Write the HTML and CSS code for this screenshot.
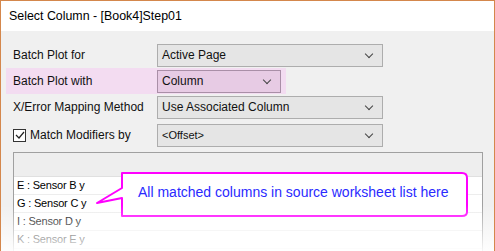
FILE: index.html
```html
<!DOCTYPE html>
<html lang="en">
    <head>
        <meta charset="UTF-8" />
        <title>Select Column</title>
        <link rel="stylesheet" href="styles.css">
    </head>
    <body>
        <div id="dialog">
            <div class="title-bar">Select Column - [Book4]Step01</div>
            <div class="content">
                <div class="form">
                    <div class="row">
                        <div class="label">Batch Plot for</div>
                        <div class="combo">Active Page<span class="arrow"></span></div>
                    </div>
                    <div class="row hl">
                        <div class="label">Batch Plot with</div>
                        <div class="combo short">Column<span class="arrow"></span></div>
                    </div>
                    <div class="row">
                        <div class="label">X/Error Mapping Method</div>
                        <div class="combo">Use Associated Column<span class="arrow"></span></div>
                    </div>
                    <div class="row check-row">
                        <div class="label">
                            <span class="checkbox">
                                <svg width="10" height="10" viewBox="0 0 10 10"><path d="M1 5 L4 8 L9 2" fill="none" stroke="#222" stroke-width="1.2"/></svg>
                            </span>
                            Match Modifiers by
                        </div>
                        <div class="combo small-text">&lt;Offset&gt;<span class="arrow"></span></div>
                    </div>
                </div>
                <div class="list">
                    <div class="list-head"></div>
                    <div class="list-row">E : Sensor B y</div>
                    <div class="list-row">G : Sensor C y</div>
                    <div class="list-row">I : Sensor D y</div>
                    <div class="list-row">K : Sensor E y</div>
                    <div class="callout">
                        <svg width="374" height="46" viewBox="0 0 374 46">
                            <path d="M26 1 H366 Q371 1 371 6 V40 Q371 44 366 44 H26 V26 L1 31 L26 16 Z" fill="#fff" stroke="#ff00ff" stroke-width="2" stroke-linejoin="round"/>
                        </svg>
                        <div class="callout-text">All matched columns in source worksheet list here</div>
                    </div>
                </div>
            </div>
            <div class="fade"></div>
        </div>
    </body>
</html>
```

FILE: styles.css
```css
body {
    margin: 0;
    background-color: #fff;
    font-family: "Liberation Sans", Arial, sans-serif;
}
#dialog {
    position: relative;
    width: 495px;
    height: 251px;
    box-sizing: border-box;
    border: 1px solid #d4874c;
    border-bottom: none;
    overflow: hidden;
    background-color: #f0f0f0;
}
.title-bar {
    height: 30px;
    line-height: 30px;
    padding-left: 8px;
    background-color: #fff;
    font-size: 12.4px;
    color: #000;
}
.content {
    padding-top: 11px;
}
.form {
    display: flex;
    flex-direction: column;
}
.row {
    display: flex;
    align-items: center;
    height: 26px;
    padding-left: 12px;
    font-size: 12px;
    color: #111;
}
.row.hl {
    margin-left: 5px;
    padding-left: 7px;
    width: 280px;
    box-sizing: border-box;
    background-color: #f3dcf1;
}
.label {
    width: 144px;
    display: flex;
    align-items: center;
}
.combo {
    position: relative;
    width: 226px;
    height: 23px;
    line-height: 21px;
    box-sizing: border-box;
    padding-left: 4px;
    border: 1px solid #adadad;
    background-color: #e5e5e5;
}
.combo.short {
    width: 124px;
    background-color: #e7cbe4;
    border-color: #a98fa7;
}
.combo.small-text {
    font-size: 11px;
}
.arrow {
    position: absolute;
    right: 10px;
    top: 6px;
    width: 5px;
    height: 5px;
    border-right: 1px solid #444;
    border-bottom: 1px solid #444;
    transform: rotate(45deg);
}
.check-row {
    margin-top: 3px;
    height: 24px;
}
.checkbox {
    display: inline-flex;
    align-items: center;
    justify-content: center;
    width: 11px;
    height: 11px;
    margin-right: 4px;
    border: 1px solid #333;
    background-color: #fff;
}
.list {
    position: relative;
    margin: 5px 11px 0 12px;
    border: 1px solid #a0a0a0;
    background-color: #fff;
    height: 120px;
}
.list-head {
    height: 23px;
    background-color: #eeeeee;
    border-bottom: 1px solid #e0e0e0;
}
.list-row {
    height: 17px;
    line-height: 17px;
    padding-left: 3px;
    border-bottom: 1px solid #ededed;
    font-size: 11px;
    letter-spacing: -0.2px;
    color: #000;
}
.callout {
    position: absolute;
    left: 82px;
    top: 19px;
    width: 374px;
    height: 46px;
}
.callout svg {
    display: block;
}
.callout-text {
    position: absolute;
    left: 42px;
    top: 12px;
    font-size: 14px;
    color: #2a2aff;
    white-space: nowrap;
}
.fade {
    position: absolute;
    left: -1px;
    right: -1px;
    bottom: 0;
    height: 46px;
    background: linear-gradient(rgba(255, 255, 255, 0), rgba(255, 255, 255, 0.9));
}
```
